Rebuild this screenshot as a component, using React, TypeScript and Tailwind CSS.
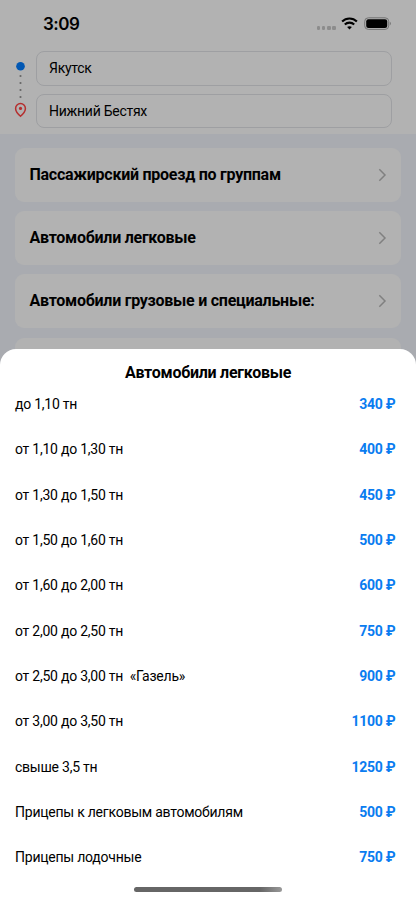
type Tariff = {
  title: string;
  price: string;
};

const CATEGORIES = [
  "Пассажирский проезд по группам",
  "Автомобили легковые",
  "Автомобили грузовые и специальные:",
  "",
];

const TARIFFS: Tariff[] = [
  { title: "до 1,10 тн", price: "340" },
  { title: "от 1,10 до 1,30 тн", price: "400" },
  { title: "от 1,30 до 1,50 тн", price: "450" },
  { title: "от 1,50 до 1,60 тн", price: "500" },
  { title: "от 1,60 до 2,00 тн", price: "600" },
  { title: "от 2,00 до 2,50 тн", price: "750" },
  { title: "от 2,50 до 3,00 тн  «Газель»", price: "900" },
  { title: "от 3,00 до 3,50 тн", price: "1100" },
  { title: "свыше 3,5 тн", price: "1250" },
  { title: "Прицепы к легковым автомобилям", price: "500" },
  { title: "Прицепы лодочные", price: "750" },
];

// Status bar
const StatusBar = () => (
  <div className="flex h-[51px] items-start justify-between pl-[43px] pr-[25px]">
    <span className="mt-[12px] font-['Inter',sans-serif] text-[17px] font-semibold leading-[24px] tracking-[-0.5px] text-black">
      3:09
    </span>
    <div className="mt-[17px] flex items-start">
      <div className="mt-[9px] flex gap-[1.6px]">
        {[0, 1, 2, 3].map((dot) => (
          <span key={dot} className="size-[3.6px] rounded-[1.2px] bg-[#8c8c8c]" />
        ))}
      </div>
      <svg width="17" height="13" viewBox="0 0 17 13" className="ml-[5.6px]" fill="none" stroke="#000" strokeWidth="2.1">
        <path d="M1.1 4.6C5.2 .55 11.8 .55 15.9 4.6" />
        <path d="M3.8 7.5C6.4 5 10.6 5 13.2 7.5" />
        <path d="M8.5 12.5 6.1 10.1C7.5 8.9 9.5 8.9 10.9 10.1Z" fill="#000" stroke="none" />
      </svg>
      <svg width="27" height="13" viewBox="0 0 27 13" className="ml-[5.6px]">
        <rect x=".7" y=".8" width="24" height="11.6" rx="3.6" fill="none" stroke="#737373" />
        <rect x="2.2" y="2.3" width="21" height="8.6" rx="2.2" fill="#000" />
        <path d="M25.8 4.8v3.6c1.4-.6 1.4-3 0-3.6Z" fill="#737373" />
      </svg>
    </div>
  </div>
);

// Route points
const Route = () => (
  <div className="flex pl-[12px] pr-[24.5px]">
    <svg width="24" height="78" viewBox="0 0 24 78" fill="none">
      <circle cx="8.5" cy="15.2" r="4.3" fill="#0157b3" />
      <g fill="#666">
        <circle cx="8.5" cy="25" r="1.1" />
        <circle cx="8.5" cy="32" r="1.1" />
        <circle cx="8.5" cy="39" r="1.1" />
        <circle cx="8.5" cy="46" r="1.1" />
      </g>
      <path
        d="M8.5 65.2C6 63 3.6 60.3 3.6 57.4a4.9 4.9 0 0 1 9.8 0c0 2.9-2.4 5.6-4.9 7.8Z"
        stroke="#b52e2e"
        strokeWidth="1.5"
      />
      <circle cx="8.5" cy="57.4" r="1.6" fill="#b52e2e" />
    </svg>
    <div className="flex flex-1 flex-col gap-[8px]">
      {["Якутск", "Нижний Бестях"].map((city) => (
        <div
          key={city}
          className="flex h-[34.7px] items-center rounded-[8px] border border-[#9e9fa2] px-[12px] text-[14px] tracking-[-0.26px] text-black"
        >
          {city}
        </div>
      ))}
    </div>
  </div>
);

const Chevron = () => (
  <svg width="9" height="14" viewBox="0 0 9 14" fill="none" stroke="#808080" strokeWidth="1.5">
    <path d="M1.3 1.2 7 7l-5.7 5.8" />
  </svg>
);

export default function App() {
  return (
    <div className="flex h-[900px] w-full flex-col overflow-hidden bg-[#a9abb0] font-['Roboto',sans-serif]">
      <div className="h-[349px] shrink-0">
        <header className="h-[133.5px] bg-[#b2b2b2]">
          <StatusBar />
          <Route />
        </header>
        <div className="flex flex-col gap-[9.2px] px-[15px] pt-[14.5px]">
          {CATEGORIES.map((category, index) => (
            <div
              key={index}
              className="flex h-[54px] shrink-0 items-center justify-between rounded-[9px] bg-[#b2b2b2] pl-[14.5px] pr-[14px]"
            >
              <span className="text-[16px] font-bold tracking-[-0.255px] text-black">{category}</span>
              {category && <Chevron />}
            </div>
          ))}
        </div>
      </div>

      {/* Bottom sheet */}
      <section className="relative flex flex-1 flex-col rounded-t-[16px] bg-white">
        <h2 className="mt-[12px] text-center text-[16px] font-bold leading-[24px] tracking-[-0.255px] text-black">
          Автомобили легковые
        </h2>
        <ul className="-mt-[3px] pl-[15px] pr-[20.5px]">
          {TARIFFS.map((tariff) => (
            <li key={tariff.title} className="flex h-[45.3px] items-center justify-between text-[14px]">
              <span className="whitespace-pre tracking-[-0.235px] text-black">{tariff.title}</span>
              <span className="font-bold tracking-[-0.25px] text-[#0a7cf0]">{tariff.price} ₽</span>
            </li>
          ))}
        </ul>
        {/* Home indicator */}
        <div className="mx-auto mt-auto mb-[8.5px] h-[5px] w-[148px] rounded-full bg-linear-to-r from-[#666] from-85% to-[#999]" />
      </section>
    </div>
  );
}
